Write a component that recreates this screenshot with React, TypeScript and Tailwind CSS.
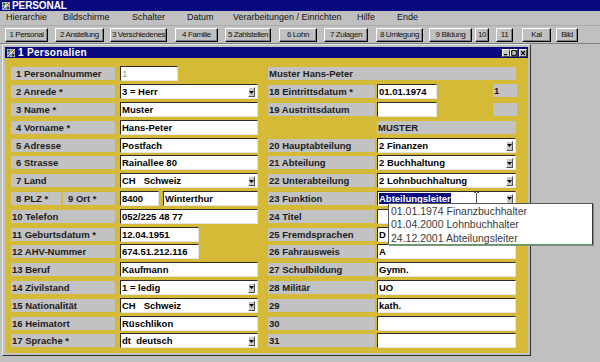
import React from 'react';

const MENU = [
  { t: 'Hierarchie', c: 'w-[57px]' },
  { t: 'Bildschirme', c: 'w-[69px]' },
  { t: 'Schalter', c: 'w-[55px]' },
  { t: 'Datum', c: 'w-[46px]' },
  { t: 'Verarbeitungen / Einrichten', c: 'w-[124px]' },
  { t: 'Hilfe', c: 'w-[40px]' },
  { t: 'Ende', c: 'w-[40px]' },
];

const TOOLBAR = [
  { t: '1 Personal', c: 'ml-[5px] w-[43px]' },
  { t: '2 Anstellung', c: 'ml-[7px] w-[49px]' },
  { t: '3 Verschiedenes', c: 'ml-[6px] w-[57px]' },
  { t: '4 Familie', c: 'ml-[8px] w-[43px]' },
  { t: '5 Zahlstellen', c: 'ml-[7px] w-[46px]' },
  { t: '6 Lohn', c: 'ml-[8px] w-[38px]' },
  { t: '7 Zulagen', c: 'ml-[7px] w-[44px]' },
  { t: '8 Umlegung', c: 'ml-[8px] w-[47px]' },
  { t: '9 Bildung', c: 'ml-[6px] w-[43px]' },
  { t: '10', c: 'ml-[3px] w-[14px]' },
  { t: '11', c: 'ml-[7px] w-[17px]' },
  { t: 'Kal', c: 'ml-[9px] w-[29px]' },
  { t: 'Bild', c: 'ml-[5px] w-[22px]' },
];

type Field = { n: string; label: string; value?: string; w: string; select?: boolean; muted?: boolean };

const LEFT: Field[] = [
  { n: '1', label: 'Personalnummer', value: '1', w: 'w-[58px]', muted: true },
  { n: '2', label: 'Anrede *', value: '3 = Herr', w: 'w-[138px]', select: true },
  { n: '3', label: 'Name *', value: 'Muster', w: 'w-[138px]' },
  { n: '4', label: 'Vorname *', value: 'Hans-Peter', w: 'w-[138px]' },
  { n: '5', label: 'Adresse', value: 'Postfach', w: 'w-[138px]' },
  { n: '6', label: 'Strasse', value: 'Rainallee 80', w: 'w-[138px]' },
  { n: '7', label: 'Land', value: 'CH\u00a0\u00a0\u00a0Schweiz', w: 'w-[138px]', select: true },
];

const LEFT2: Field[] = [
  { n: '10', label: 'Telefon', value: '052/225 48 77', w: 'w-[138px]' },
  { n: '11', label: 'Geburtsdatum *', value: '12.04.1951', w: 'w-[79px]' },
  { n: '12', label: 'AHV-Nummer', value: '674.51.212.116', w: 'w-[79px]' },
  { n: '13', label: 'Beruf', value: 'Kaufmann', w: 'w-[138px]' },
  { n: '14', label: 'Zivilstand', value: '1 = ledig', w: 'w-[138px]', select: true },
  { n: '15', label: 'Nationalität', value: 'CH\u00a0\u00a0\u00a0Schweiz', w: 'w-[138px]', select: true },
  { n: '16', label: 'Heimatort', value: 'Rüschlikon', w: 'w-[138px]' },
  { n: '17', label: 'Sprache *', value: 'dt\u00a0\u00a0deutsch', w: 'w-[138px]', select: true },
];

const RIGHT: Field[] = [
  { n: '20', label: 'Hauptabteilung', value: '2 Finanzen', w: 'w-[139px]', select: true },
  { n: '21', label: 'Abteilung', value: '2 Buchhaltung', w: 'w-[139px]', select: true },
  { n: '22', label: 'Unterabteilung', value: '2 Lohnbuchhaltung', w: 'w-[139px]', select: true },
];

const RIGHT2: Field[] = [
  { n: '24', label: 'Titel', value: '', w: 'w-[139px]' },
  { n: '25', label: 'Fremdsprachen', value: 'D', w: 'w-[139px]' },
  { n: '26', label: 'Fahrausweis', value: 'A', w: 'w-[139px]' },
  { n: '27', label: 'Schulbildung', value: 'Gymn.', w: 'w-[139px]' },
  { n: '28', label: 'Militär', value: 'UO', w: 'w-[139px]' },
  { n: '29', label: '', value: 'kath.', w: 'w-[139px]' },
  { n: '30', label: '', value: '', w: 'w-[139px]' },
  { n: '31', label: '', value: '', w: 'w-[139px]' },
];

function AppIcon() {
  return (
    <svg width="8" height="8" viewBox="0 0 8 8" className="shrink-0">
      <rect x="0" y="0" width="8" height="8" fill="#e8e8e8" />
      <rect x="0.5" y="0.5" width="3" height="3" fill="#2a7a3a" />
      <rect x="4.5" y="0.5" width="3" height="3" fill="#b03030" />
      <rect x="0.5" y="4.5" width="3" height="3" fill="#2040b0" />
      <rect x="4.5" y="4.5" width="3" height="3" fill="#404040" />
      <path d="M1 7 L7 1" stroke="#fff" strokeWidth="1" />
    </svg>
  );
}

function Arrow() {
  return (
    <span className="absolute right-[2px] top-[2px] w-[7px] h-[10px] bg-[#c8c8c8] border border-t-white border-l-white border-r-[#505050] border-b-[#505050] flex items-center justify-center">
      <svg width="5" height="3" viewBox="0 0 5 3">
        <path d="M0 0 H5 L2.5 3 Z" fill="#000" />
      </svg>
    </span>
  );
}

function Label({ n, label, w }: { n: string; label: string; w: string }) {
  return (
    <div className={`${w} h-[13px] bg-[#c2c2c2] text-[#1c1c1c] font-bold text-[9.5px] leading-[13px] whitespace-nowrap overflow-hidden ${n.length === 1 ? 'pl-[5px]' : 'pl-[1px]'}`}>
      {n}
      {label ? ' ' + label : ''}
    </div>
  );
}

function Input({ value, w, select, muted, children }: { value?: string; w: string; select?: boolean; muted?: boolean; children?: React.ReactNode }) {
  return (
    <div className={`${w} relative h-[15px] bg-white border border-t-[#2a2a2a] border-l-[#2a2a2a] border-r-[#e4e4e4] border-b-[#e4e4e4] pl-[1px] text-[9.5px] leading-[13px] font-bold whitespace-nowrap overflow-hidden ${muted ? 'text-[#9a9a9a] font-normal' : 'text-black'}`}>
      {children ?? value}
      {select && <Arrow />}
    </div>
  );
}

function Row({ children }: { children: React.ReactNode }) {
  return <div className="h-[17.8px] flex items-center">{children}</div>;
}

function LeftRow({ f }: { f: Field }) {
  return (
    <Row>
      <Label n={f.n} label={f.label} w="w-[104px]" />
      <div className="ml-[5px]">
        <Input value={f.value} w={f.w} select={f.select} muted={f.muted} />
      </div>
    </Row>
  );
}

function RightRow({ f }: { f: Field }) {
  return (
    <Row>
      <Label n={f.n} label={f.label} w="w-[107px]" />
      <div className="ml-[2px]">
        <Input value={f.value} w={f.w} select={f.select} />
      </div>
    </Row>
  );
}

function GrayBox({ w, children }: { w: string; children?: React.ReactNode }) {
  return (
    <div className={`${w} h-[13px] bg-[#c2c2c2] text-[#1c1c1c] font-bold text-[9.5px] leading-[13px] pl-[1px] whitespace-nowrap`}>{children}</div>
  );
}

export default function App() {
  return (
    <div className="relative w-[600px] h-[362px] overflow-hidden bg-[#c0c0c0] font-['Liberation_Sans',Arial,sans-serif] select-none">
      {/* app title */}
      <div className="h-[11px] bg-[#0a0a80] flex items-center pl-[2px] gap-[2px]">
        <AppIcon />
        <span className="text-white font-bold text-[10px] leading-[11px] tracking-[-0.1px]">PERSONAL</span>
      </div>

      {/* menu */}
      <div className="h-[15px] flex items-center pl-[6px] text-[9px] text-[#111] border-b border-[#a8a8a8]">
        {MENU.map((m) => (
          <span key={m.t} className={`${m.c} whitespace-nowrap`}>{m.t}</span>
        ))}
      </div>

      {/* toolbar */}
      <div className="h-[18px] flex items-center border-b border-[#808080]">
        {TOOLBAR.map((b) => (
          <div
            key={b.t}
            className={`${b.c} h-[14px] flex items-center justify-center border border-t-white border-l-white border-r-black border-b-black shadow-[inset_-1px_-1px_0_#808080] text-[8px] tracking-[-0.4px] text-[#111] whitespace-nowrap`}
          >
            {b.t}
          </div>
        ))}
      </div>

      {/* MDI area */}
      <div className="flex">
        <div className="ml-[2px] w-[529px] h-[312px] border border-t-[#e8e8e8] border-l-[#e8e8e8] border-r-[#303030] border-b-[#303030] p-[2px] flex flex-col bg-[#c0c0c0]">
          <div className="h-[11px] bg-[#0a0a80] flex items-center pl-[2px] pr-[1px]">
            <AppIcon />
            <span className="ml-[3px] text-white font-bold text-[10px] leading-[11px] tracking-[0.3px]">1 Personalien</span>
            <div className="ml-auto flex">
              {['min', 'max', 'close'].map((k) => (
                <div key={k} className={`w-[8px] h-[8px] bg-[#c8c8c8] border border-t-white border-l-white border-r-[#404040] border-b-[#404040] flex items-center justify-center ${k === 'close' ? 'ml-[1px]' : ''}`}>
                  <svg width="6" height="6" viewBox="0 0 6 6">
                    {k === 'min' && <rect x="1" y="4" width="3" height="1.2" fill="#000" />}
                    {k === 'max' && <rect x="0.7" y="0.7" width="4.6" height="4.6" fill="none" stroke="#000" strokeWidth="1" />}
                    {k === 'close' && <path d="M1 1 L5 5 M5 1 L1 5" stroke="#000" strokeWidth="1.1" />}
                  </svg>
                </div>
              ))}
            </div>
          </div>

          <div className="flex-1 bg-[#d4ba36] pt-[7px] pl-[6px] flex gap-[10px]">
            {/* left column */}
            <div className="flex flex-col">
              {LEFT.map((f) => (
                <LeftRow key={f.n} f={f} />
              ))}
              <Row>
                <Label n="8" label="PLZ *" w="w-[50px]" />
                <div className="ml-[2px]">
                  <Label n="9" label="Ort *" w="w-[52px]" />
                </div>
                <div className="ml-[5px]">
                  <Input value="8400" w="w-[39px]" />
                </div>
                <div className="ml-[4px]">
                  <Input value="Winterthur" w="w-[95px]" />
                </div>
              </Row>
              {LEFT2.map((f) => (
                <LeftRow key={f.n} f={f} />
              ))}
            </div>

            {/* right column */}
            <div className="flex flex-col">
              <Row>
                <GrayBox w="w-[248px]">Muster Hans-Peter</GrayBox>
              </Row>
              <Row>
                <Label n="18" label="Eintrittsdatum *" w="w-[107px]" />
                <div className="ml-[2px]">
                  <Input value="01.01.1974" w="w-[60px]" />
                </div>
                <div className="ml-[56px] -mt-[2px]">
                  <GrayBox w="w-[24px]">1</GrayBox>
                </div>
              </Row>
              <Row>
                <Label n="19" label="Austrittsdatum" w="w-[107px]" />
                <div className="ml-[2px]">
                  <Input value="" w="w-[60px]" />
                </div>
                <div className="ml-[56px]">
                  <GrayBox w="w-[24px]" />
                </div>
              </Row>
              <Row>
                <div className="ml-[109px]">
                  <GrayBox w="w-[139px]">MUSTER</GrayBox>
                </div>
              </Row>
              {RIGHT.map((f) => (
                <RightRow key={f.n} f={f} />
              ))}
              <Row>
                <Label n="23" label="Funktion" w="w-[107px]" />
                <div className="ml-[2px]">
                  <Input w="w-[139px]" select>
                    <span className="bg-[#0a0a80] text-white">Abteilungsleiter</span>
                  </Input>
                </div>
              </Row>
              {RIGHT2.map((f) => (
                <RightRow key={f.n} f={f} />
              ))}
            </div>
          </div>
        </div>
      </div>

      {/* I-beam cursor */}
      <svg className="absolute left-[473px] top-[192px]" width="7" height="13" viewBox="0 0 7 13">
        <path d="M1 0.5 H3 M4 0.5 H6 M3.5 1 V12 M1 12.5 H3 M4 12.5 H6" stroke="#555" strokeWidth="1" fill="none" />
      </svg>

      {/* history dropdown */}
      <div className="absolute left-[388px] top-[203px] w-[205px] h-[42px] bg-white border border-t-[#555] border-l-[#555] border-r-[#333] border-b-[#5aa55a] shadow-[1px_1px_0_#888] pl-[2px] pt-[1px] text-[10.5px] leading-[13.4px] text-[#3a3a3a] whitespace-nowrap">
        <div>01.01.1974 Finanzbuchhalter</div>
        <div>01.04.2000 Lohnbuchhalter</div>
        <div>24.12.2001 Abteilungsleiter</div>
      </div>
    </div>
  );
}
